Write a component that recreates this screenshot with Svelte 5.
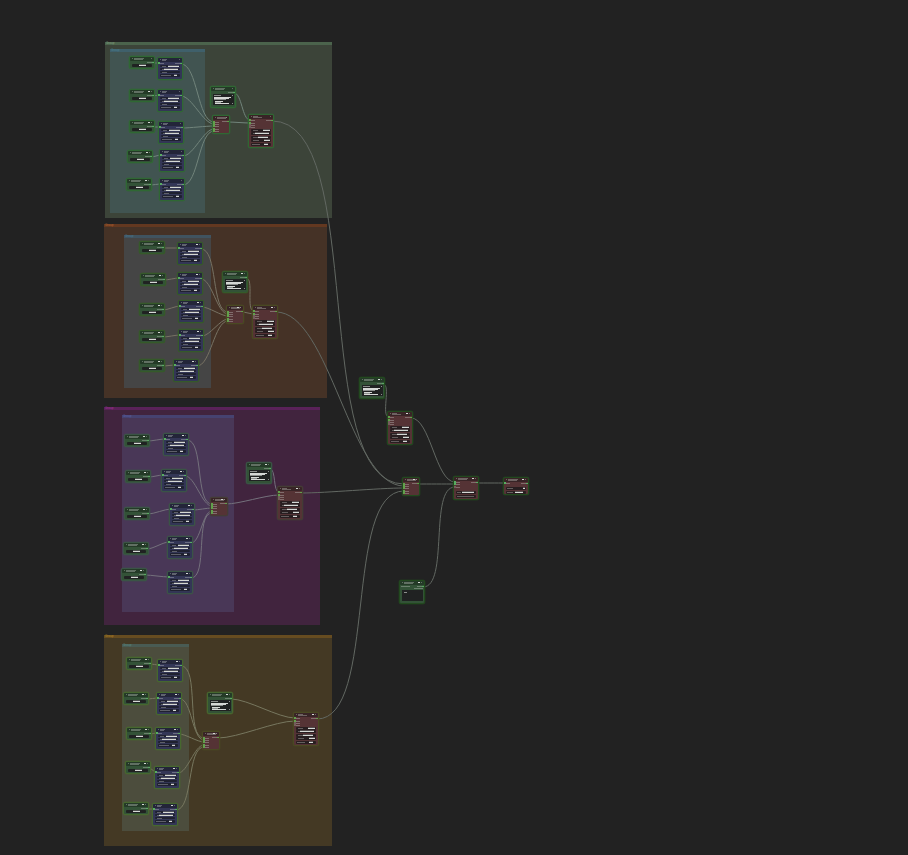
<script>
    // Node sizes by kind
    const sizes = {
        input: [26, 13],
        llm: [26, 23],
        join: [18, 19],
        agent: [26, 34],
        text: [26, 22],
        merge: [26, 24],
        save: [26, 18],
        note: [26, 24],
    };

    // Field rows: [y, height, label start, label width, value start, value width]
    const fields = {
        input: [[8, 3, 0, 0, 10, 7]],
        llm: [
            [8, 2, 5, 4, 11, 11],
            [11, 2, 5, 5, 7, 14],
            [14, 2, 5, 5, 0, 0],
            [17, 3, 4, 10, 17, 3],
        ],
        join: [],
        agent: [
            [15, 3, 5, 5, 15, 7],
            [18, 3, 5, 5, 7, 14],
            [22, 3, 5, 5, 10, 10],
            [25, 3, 5, 6, 16, 6],
            [29, 3, 4, 8, 16, 4],
        ],
        text: [],
        merge: [
            [15, 3, 4, 4, 9, 12],
            [19, 3, 4, 17, 0, 0],
        ],
        save: [
            [10, 3, 4, 6, 20, 2],
            [14, 3, 4, 6, 12, 8],
        ],
        note: [],
    };

    const inSlots = {
        input: [],
        llm: [6],
        join: [7, 9, 11, 14, 16],
        agent: [6, 9, 11, 13],
        text: [],
        merge: [6, 8, 11],
        save: [6],
        note: [],
    };

    const groups = [
        {
            name: "green",
            box: [105, 42, 227, 176],
            inner: [110, 49, 95, 164],
            inputs: [[129, 56], [129, 89], [129, 120], [127, 150], [126, 178]],
            llms: [[157, 57], [157, 89], [158, 121], [159, 149], [159, 178]],
            text: [210, 86],
            join: [212, 115],
            agent: [248, 114],
        },
        {
            name: "orange",
            box: [104, 224, 223, 174],
            inner: [124, 235, 87, 153],
            inputs: [[139, 241], [140, 273], [139, 303], [139, 330], [139, 359]],
            llms: [[177, 242], [177, 272], [178, 300], [178, 329], [173, 359]],
            text: [222, 271],
            join: [226, 305],
            agent: [252, 305],
        },
        {
            name: "purple",
            box: [104, 407, 216, 218],
            inner: [122, 415, 112, 197],
            inputs: [[124, 434], [125, 470], [124, 507], [123, 542], [121, 568]],
            llms: [[163, 433], [161, 469], [169, 503], [167, 536], [167, 571]],
            text: [246, 462],
            join: [210, 497],
            agent: [277, 486],
        },
        {
            name: "yellow",
            box: [104, 635, 228, 211],
            inner: [122, 644, 67, 187],
            inputs: [[126, 657], [123, 692], [126, 727], [125, 761], [123, 802]],
            llms: [[157, 659], [156, 692], [155, 727], [154, 766], [152, 803]],
            text: [207, 692],
            join: [202, 731],
            agent: [293, 712],
        },
    ];

    const nodes = [];
    const links = [];

    function add(kind, pos, tone) {
        const node = { kind, x: pos[0], y: pos[1], w: sizes[kind][0], h: sizes[kind][1], tone };
        nodes.push(node);
        return node;
    }

    // Spline handles reach a quarter of the distance, as in the graph editor
    function connect(from, to, slot, tone) {
        const x1 = from.x + from.w - 2;
        const y1 = from.y + 7;
        const x2 = to.x + 2;
        const y2 = to.y + inSlots[to.kind][slot];
        const d = Math.hypot(x2 - x1, y2 - y1) * 0.25;
        links.push({ d: `M${x1} ${y1}C${x1 + d} ${y1} ${x2 - d} ${y2} ${x2} ${y2}`, tone });
    }

    const join = add("join", [402, 477], "root");
    const merge = add("merge", [453, 476], "root");
    const save = add("save", [503, 477], "root");
    const agent = add("agent", [387, 411], "root");
    const prompt = add("text", [359, 377], "root");
    const note = add("note", [399, 580], "root");

    groups.forEach((g, i) => {
        const gJoin = add("join", g.join, g.name);
        const gAgent = add("agent", g.agent, g.name);
        const gText = add("text", g.text, g.name);
        g.llms.forEach((pos, n) => {
            const llm = add("llm", pos, g.name);
            connect(add("input", g.inputs[n], g.name), llm, 0, g.name);
            connect(llm, gJoin, n, g.name);
        });
        connect(gText, gAgent, 0, g.name);
        connect(gJoin, gAgent, 1, g.name);
        connect(gAgent, join, i, "root");
    });

    connect(prompt, agent, 0, "root");
    connect(agent, merge, 0, "root");
    connect(join, merge, 1, "root");
    connect(note, merge, 2, "root");
    connect(merge, save, 0, "root");
</script>

<main>
    <svg class="graph" role="img" aria-label="Node graph">
        {#each groups as g}
            <g class={g.name}>
                <rect class="outer" x={g.box[0]} y={g.box[1]} width={g.box[2]} height={g.box[3]} />
                <rect class="outer-bar" x={g.box[0]} y={g.box[1]} width={g.box[2]} height="3" />
                <text class="outer-name" x={g.box[0] + 1} y={g.box[1] + 2}>Group</text>
                <rect class="inner" x={g.inner[0]} y={g.inner[1]} width={g.inner[2]} height={g.inner[3]} />
                <rect class="inner-bar" x={g.inner[0]} y={g.inner[1]} width={g.inner[2]} height="3" />
                <text class="inner-name" x={g.inner[0] + 1} y={g.inner[1] + 2}>Group</text>
            </g>
        {/each}

        {#each links as link}
            <path class="link {link.tone}" d={link.d} />
        {/each}

        {#each nodes as n}
            <g class="node {n.kind} {n.tone}" transform="translate({n.x} {n.y})">
                <rect class="ring" width={n.w} height={n.h} rx="2" />
                <rect class="body" x="1" y="1" width={n.w - 2} height={n.h - 2} rx="1" />
                <rect class="title" x="1" y="1" width={n.w - 2} height="4" rx="1" />
                <rect class="mark dim" x="3" y="2" width="1" height="1" />
                <rect class="mark dim" x="5" y="2" width={n.kind === "llm" || n.kind === "agent" ? 5 : 10} height="1" />
                <rect class="mark dim" x="5" y="3" width={n.kind === "llm" ? 4 : 9} height="1" />
                {#if n.tone !== "green" || (n.y > 80 && n.kind === "input")}
                    <rect class="mark" x={n.w - 7} y="2" width="2" height="1" />
                {/if}
                <rect class="mark dim" x={n.w - 4} y="2" width="1" height="1" />

                {#each inSlots[n.kind] as y, i}
                    <rect class={i < 2 || n.kind === "join" ? "dot" : "mark faint"} x="1" y={y - 1} width="2" height="2" />
                    <rect class="mark dim" x="3" {y} width="4" height="1" />
                {/each}
                <rect class="mark dim" x={n.w - 8} y="6" width="6" height="1" />
                <rect class="dot" x={n.w - 3} y="6" width="2" height="1" />

                {#each fields[n.kind] as [y, h, lx, lw, vx, vw]}
                    <rect class="field" x="3" {y} width="20" height={h} rx="1" />
                    <rect class="mark dim" x={lx} y={y + 1} width={lw} height="1" />
                    <rect class="mark" x={vx} y={y + 1} width={vw} height="1" />
                    <rect class="mark faint" x={vx} {y} width={vw} height="1" />
                {/each}

                {#if n.kind === "text"}
                    <rect class="field" x="3" y="8" width="21" height="11" />
                    <rect class="mark soft" x="4" y="9" width="7" height="1" />
                    <rect class="mark" x="4" y="11" width="17" height="1" />
                    <rect class="mark" x="4" y="12" width="15" height="1" />
                    <rect class="mark soft" x="4" y="13" width="12" height="1" />
                    <rect class="mark" x="5" y="15" width="8" height="1" />
                    <rect class="mark soft" x="5" y="16" width="6" height="1" />
                    <rect class="mark" x="5" y="17" width="14" height="1" />
                    <rect class="mark soft" x="22" y="9" width="1" height="1" />
                    <rect class="mark soft" x="22" y="17" width="1" height="1" />
                {:else if n.kind === "note"}
                    <rect class="field" x="3" y="10" width="21" height="11" />
                    <rect class="mark soft" x="5" y="12" width="3" height="1" />
                    <rect class="mark dim" x="15" y="8" width="9" height="1" />
                    <rect class="mark dim" x="2" y="6" width="9" height="1" />
                {/if}
            </g>
        {/each}
    </svg>
</main>

<style>
    :global(body) {
        margin: 0;
        background: #222;
    }

    main {
        height: 100vh;
        overflow: hidden;
        background: #222;
    }

    .graph {
        display: block;
        width: 100%;
        height: 100%;
    }

    .green {
        --fill: #3c4439;
        --bar: #4b634c;
        --name: #86a585;
        --inner: #415451;
        --inner-bar: #3f606b;
        --inner-name: #4c8193;
        --ring: #306834;
        --link: #71847b;
    }

    .orange {
        --fill: #453226;
        --bar: #633820;
        --name: #b96532;
        --inner: #454545;
        --inner-bar: #40535f;
        --inner-name: #4b7c94;
        --ring: #355a2a;
        --link: #777263;
    }

    .purple {
        --fill: #41243e;
        --bar: #5a2258;
        --name: #a4379c;
        --inner: #493757;
        --inner-bar: #464270;
        --inner-name: #5c63a9;
        --ring: #3b5546;
        --link: #74717c;
    }

    .yellow {
        --fill: #443924;
        --bar: #664c20;
        --name: #b58727;
        --inner: #4c4d3d;
        --inner-bar: #495b53;
        --inner-name: #5b8c85;
        --ring: #47682f;
        --link: #77775f;
    }

    .root {
        --ring: #234a1f;
        --link: #626862;
    }

    .outer {
        fill: var(--fill);
    }

    .outer-bar {
        fill: var(--bar);
    }

    .inner {
        fill: var(--inner);
    }

    .inner-bar {
        fill: var(--inner-bar);
    }

    text {
        font-family: "Liberation Sans", Arial, sans-serif;
        font-size: 3px;
    }

    .outer-name {
        fill: var(--name);
    }

    .inner-name {
        fill: var(--inner-name);
    }

    .link {
        fill: none;
        stroke: var(--link);
        stroke-width: 1;
    }

    .ring {
        fill: var(--ring);
        stroke: var(--ring);
        stroke-opacity: 0.6;
    }

    .input,
    .text,
    .note {
        --body: #335237;
        --title: #243a27;
    }

    .llm {
        --body: #333656;
        --title: #232539;
    }

    .join,
    .agent,
    .merge,
    .save {
        --body: #553335;
        --title: #382426;
    }

    .join,
    .agent {
        --slot: #62a04c;
    }

    .agent.orange,
    .join.orange,
    .agent.yellow,
    .join.yellow {
        --ring: #4a4a23;
    }

    .agent.purple,
    .join.purple {
        --ring: #453d35;
    }

    .body {
        fill: var(--body);
    }

    .title {
        fill: var(--title);
    }

    .field {
        fill: #202222;
    }

    .llm .field {
        fill: #1f2130;
    }

    .agent .field,
    .merge .field,
    .save .field {
        fill: #281e20;
    }

    .dot {
        fill: var(--slot, #58ad62);
    }

    .mark {
        fill: #d5d8d5;
    }

    .soft {
        fill-opacity: 0.6;
    }

    .dim {
        fill-opacity: 0.35;
    }

    .faint {
        fill-opacity: 0.25;
    }
</style>
